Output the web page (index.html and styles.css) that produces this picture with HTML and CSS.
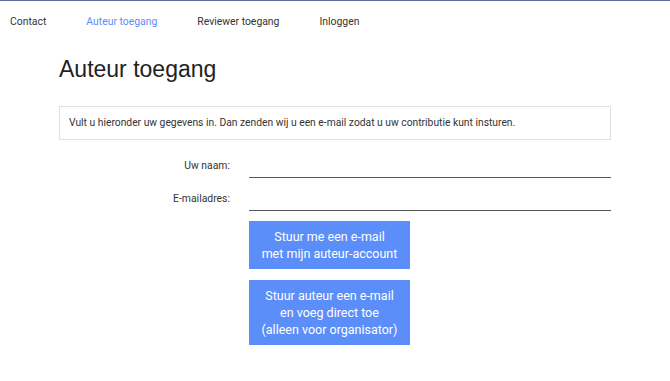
FILE: index.html
```html
<!DOCTYPE html>
<html lang="nl">
<head>
    <meta charset="UTF-8">
    <meta name="viewport" content="width=device-width, initial-scale=1.0">
    <title>Auteur toegang</title>
    <link rel="stylesheet" href="styles.css">
</head>
<body>
    <nav class="topnav">
        <a href="#" class="nav-link">Contact</a>
        <a href="#" class="nav-link active">Auteur toegang</a>
        <a href="#" class="nav-link">Reviewer toegang</a>
        <a href="#" class="nav-link">Inloggen</a>
    </nav>

    <div class="container">
        <h1>Auteur toegang</h1>

        <div class="info-box">
            Vult u hieronder uw gegevens in. Dan zenden wij u een e-mail zodat u uw contributie kunt insturen.
        </div>

        <form class="form">
            <div class="form-row">
                <label for="name">Uw naam:</label>
                <input type="text" id="name">
            </div>
            <div class="form-row">
                <label for="email">E-mailadres:</label>
                <input type="email" id="email">
            </div>
            <div class="form-row">
                <span></span>
                <div class="actions">
                    <button type="button" class="btn">Stuur me een e-mail<br>met mijn auteur-account</button>
                    <button type="button" class="btn">Stuur auteur een e-mail<br>en voeg direct toe<br>(alleen voor organisator)</button>
                </div>
            </div>
        </form>
    </div>
</body>
</html>
```

FILE: styles.css
```css
:root {
    --primary-color: #5b8ef8;
    --text-color: #333333;
    --border-color: #e0e0e0;
}

* {
    margin: 0;
    padding: 0;
    box-sizing: border-box;
}

body {
    font-family: Roboto, 'Liberation Sans', sans-serif;
    color: var(--text-color);
    background-color: #ffffff;
    border-top: 1px solid #5c6a9c;
}

.topnav {
    display: flex;
    gap: 40px;
    padding: 13px 10px 0;
    font-size: 10.4px;
    line-height: 16px;
}

.nav-link {
    color: var(--text-color);
    text-decoration: none;
}

.nav-link.active {
    color: var(--primary-color);
}

.container {
    width: 552px;
    margin: 0 auto;
}

h1 {
    font-family: 'Liberation Sans', Arial, sans-serif;
    font-weight: normal;
    font-size: 23px;
    line-height: 28px;
    margin-top: 25px;
    color: #222;
}

.info-box {
    margin-top: 23px;
    border: 1px solid var(--border-color);
    padding: 9px 9px;
    font-size: 10.3px;
    line-height: 14px;
}

.form {
    margin-top: 15px;
}

.form-row {
    display: grid;
    grid-template-columns: 171px 1fr;
    column-gap: 19px;
    align-items: end;
    margin-bottom: 10px;
}

.form-row label {
    text-align: right;
    font-size: 10.4px;
    line-height: 14px;
    padding-bottom: 5px;
}

.form-row input {
    border: none;
    border-bottom: 1px solid #555;
    height: 23px;
    font-size: 12px;
    outline: none;
}

.actions {
    display: flex;
    flex-direction: column;
    align-items: flex-start;
    gap: 11px;
}

.btn {
    width: 161px;
    padding: 7px 4px;
    background-color: var(--primary-color);
    color: #ffffff;
    border: none;
    font-family: Roboto, sans-serif;
    font-size: 12.5px;
    line-height: 17px;
    cursor: pointer;
}
```
